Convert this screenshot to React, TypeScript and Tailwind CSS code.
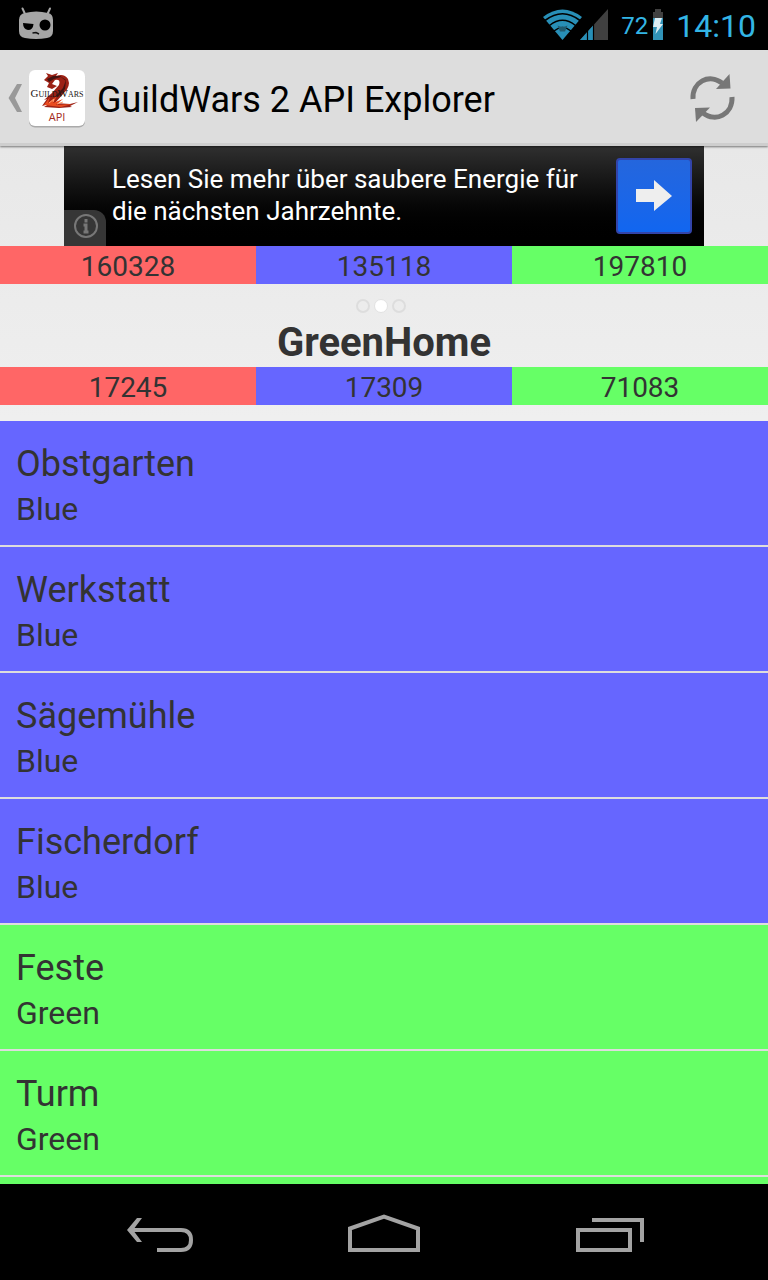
import React from "react";

type Team = "red" | "blue" | "green";

const teamBackground: Record<Team, string> = {
  red: "bg-[#ff6666]",
  blue: "bg-[#6666ff]",
  green: "bg-[#66ff66]",
};

const teamLabel: Record<Team, string> = { red: "Red", blue: "Blue", green: "Green" };

const objectives: { name: string; owner: Team }[] = [
  { name: "Obstgarten", owner: "blue" },
  { name: "Werkstatt", owner: "blue" },
  { name: "Sägemühle", owner: "blue" },
  { name: "Fischerdorf", owner: "blue" },
  { name: "Feste", owner: "green" },
  { name: "Turm", owner: "green" },
];

function StatusBar() {
  return (
    <div className="flex h-[50px] shrink-0 items-center bg-black pr-3 pl-[18px] text-[#33b5e5]">
      <svg className="h-9 w-9" viewBox="0 0 36 36" aria-hidden="true">
        <path d="M4.500 1.500L7.500 8M32 1.500L29 8" stroke="#a6a6a6" strokeWidth="2" strokeLinecap="round" />
        <path d="M7 6Q18 3 30 6Q35 7 35 13V24Q35 30 29 31Q18 33 7 31Q1 30 1 24V13Q1 7 7 6Z" fill="#a6a6a6" />
        <path d="M5 16L15.500 17Q15 23 10 23Q5 22 5 16Z" fill="#000" />
        <circle cx="27" cy="18" r="5.500" fill="#000" />
        <path d="M14.500 26L18 25.500L21 27" stroke="#111" strokeWidth="1.500" fill="none" />
      </svg>
      <svg className="ml-auto h-9 w-[66px]" viewBox="542 7 66 36" aria-hidden="true">
        <path d="M543 17Q562.500 2 582 17L562.500 40Z" fill="#288fb7" />
        <path d="M545 20.500Q562.500 7 580 20.500M549.500 25.500Q562.500 15 575.500 25.500M554 31Q562.500 24 571 31" fill="none" stroke="#000" strokeWidth="1.600" />
        <path d="M557.500 25.500Q562.500 28 567.500 25.500L565 31.500H560Z" fill="#205b70" />
        <path d="M580 40L608 9V40Z" fill="#404040" />
        <path d="M580 40L594 24.500V40Z" fill="#288fb7" />
        <path d="M587.500 30V40M593.500 23V40" stroke="#000" strokeWidth="1.200" />
      </svg>
      <span className="ml-[13px] pt-px text-2xl">72</span>
      <svg className="ml-1 h-9 w-3" viewBox="652 7 12 36" aria-hidden="true">
        <path d="M655 9H661V12H663V40H653V12H655Z" fill="#404040" />
        <path d="M653 18H663V40H653Z" fill="#3193b8" />
        <path d="M655 18H662L660 24H663L655.500 34L657 27H653Z" fill="#dceef5" />
      </svg>
      <span className="ml-3 pt-px text-[32px]">14:10</span>
    </div>
  );
}

function AppLogo() {
  return (
    <svg className="h-[60px] w-[60px]" viewBox="0 0 60 60" aria-hidden="true">
      <rect x="2" y="3.500" width="56" height="56" rx="6" fill="#aaa" />
      <rect x="2" y="2" width="56" height="56" rx="6" fill="#fff" />
      <path d="M17 12L21 8L19 5L25 7L31 5L29 8Q37 5 41 11Q44 18 37 25L28 35L43 36L51 34L43 38L45 39L32 40L17 39L22 36L15 38L20 31L17 32L25 25L32 17Q34 11 28 12L25 16L30 18L25 21L20 19L22 15Z" fill="#9c2115" />
      <path d="M20 11L26 8L33 8L39 12L36 20L28 29L31 29L38 21L39 13L34 9L27 11L22 14Z" fill="#431411" />
      <path d="M17 37L23 29L21 35L30 28L26 35L36 31L29 37L45 36L34 39Z" fill="#e94b20" />
      <path d="M22 35L27 31L26 34M30 36L36 34" fill="none" stroke="#ff9d70" strokeWidth="1" />
      <text x="30" y="29" textAnchor="middle" fontFamily="Liberation Serif, serif" fontSize="11" fill="#1d1717">
        G<tspan fontSize="8">UILD</tspan>W<tspan fontSize="8">ARS</tspan>
      </text>
      <text x="30" y="53" textAnchor="middle" fontFamily="Open Sans, sans-serif" fontSize="11" fill="#a32920">
        API
      </text>
    </svg>
  );
}

function ActionBar() {
  return (
    <header className="relative z-10 flex h-24 shrink-0 items-center border-b-[3px] border-[#cecece] bg-[#dddddd] pt-[2px] pr-8 pl-2 shadow-[0_1px_2px_rgba(0,0,0,0.5)]">
      <button type="button" aria-label="Navigate up" className="flex items-center gap-1">
        <svg className="h-7 w-[15px]" viewBox="0 0 15 28" aria-hidden="true">
          <path d="M9 0H14L7 14L14 28H9L0.500 14Z" fill="#999" />
        </svg>
        <AppLogo />
      </button>
      <h1 className="ml-[10px] pt-1 text-4xl text-black">GuildWars 2 API Explorer</h1>
      <button type="button" aria-label="Refresh" className="ml-auto">
        <svg className="h-12 w-12" viewBox="0 0 48 48" aria-hidden="true">
          <path d="M5 25C4 8 21 -1 34 9" fill="none" stroke="#777" strokeWidth="5" />
          <path d="M41.500 0L42.500 14.500L28 15Z" fill="#777" />
          <path d="M44 23C45 40 28 49 15 39" fill="none" stroke="#777" strokeWidth="5" />
          <path d="M8 48L7 34L22 33.500Z" fill="#777" />
        </svg>
      </button>
    </header>
  );
}

function AdBanner() {
  return (
    <aside className="relative mx-auto flex min-h-[100px] w-5/6 items-center bg-linear-to-b from-[#303030] to-black pr-3 pl-12 text-white">
      <p className="max-w-[490px] pb-[2px] text-[26px] leading-8">
        Lesen Sie mehr über saubere Energie für die nächsten Jahrzehnte.
      </p>
      <a
        href="#energie"
        aria-label="Anzeige öffnen"
        className="ml-auto flex h-[76px] w-[76px] shrink-0 items-center justify-center rounded-sm border-2 border-[#3244aa] bg-linear-to-b from-[#2466dd] to-[#1166f0]"
      >
        <svg className="h-8 w-9" viewBox="0 0 36 32" aria-hidden="true">
          <path d="M0 9H18V0L36 16L18 31V22H0Z" fill="#eee" />
        </svg>
      </a>
      <button
        type="button"
        aria-label="Info"
        className="absolute bottom-0 left-0 flex h-9 w-[42px] items-center justify-center rounded-tr-xl bg-[#363636] pb-1 pl-[2px]"
      >
        <svg className="h-6 w-6" viewBox="0 0 24 24" aria-hidden="true">
          <circle cx="12" cy="12" r="11" fill="none" stroke="#777" strokeWidth="2" />
          <path d="M12 5V8.500M9.500 11H12V18M9.500 18H14.500" fill="none" stroke="#777" strokeWidth="3" />
        </svg>
      </button>
    </aside>
  );
}

function ScoreBar({ red, blue, green }: { red: number; blue: number; green: number }) {
  const scores: [Team, number][] = [
    ["red", red],
    ["blue", blue],
    ["green", green],
  ];
  return (
    <div className="grid grid-cols-3 text-center text-[28px] leading-[34px]">
      {scores.map(([team, score]) => (
        <div key={team} className={`pt-1 ${teamBackground[team]}`}>
          {score}
        </div>
      ))}
    </div>
  );
}

function PageDots() {
  return (
    <div className="flex justify-center gap-1 pt-[15px] pr-[6px]">
      {[0, 1, 2].map((page) => (
        <span
          key={page}
          className={
            page === 1
              ? "h-[14px] w-[14px] rounded-full border border-[#e2e2e2] bg-white"
              : "h-[14px] w-[14px] rounded-full border-2 border-[#dddddd]"
          }
        />
      ))}
    </div>
  );
}

function ObjectiveList() {
  return (
    <ul className="mt-4 min-h-0 flex-1 overflow-y-auto [scrollbar-width:none]">
      {objectives.map(({ name, owner }) => (
        <li key={name} className={`border-b-2 border-[#dddddd] px-4 pt-5 pb-[14px] ${teamBackground[owner]}`}>
          <div className="text-4xl leading-[46px]">{name}</div>
          <div className="text-[32px] leading-[44px]">{teamLabel[owner]}</div>
        </li>
      ))}
      <li className="h-2 bg-[#66ff66]" />
    </ul>
  );
}

function NavigationBar() {
  return (
    <nav className="flex h-24 shrink-0 items-center justify-center bg-black">
      <div className="grid w-[678px] max-w-full grid-cols-3 justify-items-center">
        <button type="button" aria-label="Back">
          <svg className="h-12 w-[72px]" viewBox="122 1208 72 48" fill="none" stroke="#a3a3a3" strokeWidth="4" aria-hidden="true">
            <path d="M130 1230H181Q191 1230 191 1240Q191 1250 181 1250H157" />
            <path d="M137 1218H142L133 1230L142 1242H137L127 1230Z" fill="#a3a3a3" stroke="none" />
          </svg>
        </button>
        <button type="button" aria-label="Home">
          <svg className="h-12 w-[72px]" viewBox="348 1208 72 48" fill="none" stroke="#a3a3a3" strokeWidth="4" aria-hidden="true">
            <path d="M350 1250V1228.500L384 1216.500L418 1228.500V1250Z" />
          </svg>
        </button>
        <button type="button" aria-label="Recent apps">
          <svg className="h-12 w-[72px]" viewBox="574 1208 72 48" fill="none" stroke="#a3a3a3" strokeWidth="4" aria-hidden="true">
            <path d="M578 1230H630V1250H578ZM592 1220H642V1242" />
          </svg>
        </button>
      </div>
    </nav>
  );
}

export default function App() {
  return (
    <div className="flex h-screen flex-col bg-[#eeeeee] font-['Roboto',sans-serif] text-[#333333]">
      <StatusBar />
      <ActionBar />
      <main className="flex min-h-0 flex-1 flex-col bg-linear-to-b from-[#e8e8e8] to-[#f0f0f0] to-30%">
        <AdBanner />
        <ScoreBar red={160328} blue={135118} green={197810} />
        <PageDots />
        <h2 className="pt-[6px] text-center text-[40px] leading-[48px] font-bold">GreenHome</h2>
        <ScoreBar red={17245} blue={17309} green={71083} />
        <ObjectiveList />
      </main>
      <NavigationBar />
    </div>
  );
}
